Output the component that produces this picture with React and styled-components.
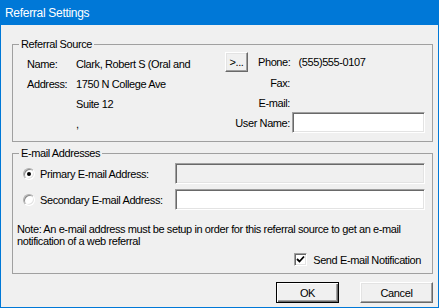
import React from "react";
import styled, { createGlobalStyle, css } from "styled-components";

const Global = createGlobalStyle`
  html, body { margin: 0; padding: 0; background: #fff; }
  body { font-family: "Liberation Sans", Arial, sans-serif; }
  * { box-sizing: border-box; }
`;

const Window = styled.div`
  width: 439px;
  height: 308px;
  border: 1px solid #0078d7;
  display: flex;
  flex-direction: column;
  font-family: "Liberation Sans", Arial, sans-serif;
  font-size: 11px;
  letter-spacing: -0.4px;
  color: #000;
`;

const TitleBar = styled.div`
  height: 24px;
  background: #0078d7;
  color: #fff;
  display: flex;
  align-items: center;
  padding-left: 4px;
  font-size: 12px;
  letter-spacing: -0.3px;
`;

const Body = styled.div`
  flex: 1;
  background: #f0f0f0;
  padding: 13px 5px 0 11px;
  display: flex;
  flex-direction: column;
`;

const Group = styled.fieldset`
  margin: ${(p) => (p.$gap ? `${p.$gap}px` : "0")} 0 0 0;
  padding: 0;
  min-width: 0;
  border: 1px solid #a0a0a0;
`;

const Legend = styled.legend`
  margin-left: 6px;
  padding: 0 2px;
  line-height: 13px;
`;

const SourceRow = styled.div`
  display: flex;
  align-items: flex-start;
  padding: 0 7px 7px 14px;
`;

const LeftGrid = styled.div`
  display: grid;
  grid-template-columns: 49px 149px;
  grid-auto-rows: 20px;
  align-items: center;
  margin-top: 3px;
  white-space: nowrap;
`;

const RightGrid = styled.div`
  display: grid;
  grid-template-columns: 65px 133px;
  column-gap: 2px;
  grid-template-rows: 21px 21px 19px 21px;
  align-items: center;
  white-space: nowrap;
`;

const TopLine = styled.div`
  grid-column: 1 / span 2;
  display: flex;
  align-items: center;
`;

const RightLabel = styled.span`
  text-align: right;
`;

const Spaced = styled.span`
  margin-left: ${(p) => p.$ml || 0}px;
`;

const raised = css`
  background: #f0f0f0;
  border: 1px solid;
  border-color: #fff #696969 #696969 #fff;
  box-shadow: inset -1px -1px #a0a0a0, inset 1px 1px #e3e3e3;
  font-family: "Liberation Sans", Arial, sans-serif;
  font-size: 11px;
  letter-spacing: -0.4px;
  color: #000;
  padding: 0;
`;

const SmallButton = styled.button`
  ${raised};
  width: 23px;
  height: 20px;
  line-height: 16px;
`;

const sunken = css`
  border: 1px solid;
  border-color: #a0a0a0 #fff #fff #a0a0a0;
  box-shadow: inset 1px 1px #696969, inset -1px -1px #e3e3e3;
`;

const TextBox = styled.div`
  ${sunken};
  width: ${(p) => p.$w}px;
  height: 21px;
  background: ${(p) => (p.$disabled ? "#f0f0f0" : "#fff")};
`;

const EmailBody = styled.div`
  display: flex;
  flex-direction: column;
  padding: 0 0 7px 0;
`;

const RadioRow = styled.div`
  display: flex;
  align-items: center;
  height: 21px;
  margin-top: ${(p) => p.$mt}px;
  padding-left: 10px;
`;

const RadioLabel = styled.label`
  display: flex;
  align-items: center;
  width: 152px;
  gap: 5px;
  white-space: nowrap;
`;

const Radio = styled.span`
  position: relative;
  width: 12px;
  height: 12px;
  border-radius: 50%;
  background: #fff;
  border: 1px solid;
  border-color: #b0b0b0 #fff #fff #b0b0b0;
  box-shadow: inset 1px 1px #8a8a8a, inset -1px -1px #e3e3e3;
  flex: none;
  ${(p) =>
    p.$checked &&
    css`
      &::after {
        content: "";
        position: absolute;
        left: 3px;
        top: 3px;
        width: 4px;
        height: 4px;
        border-radius: 50%;
        background: #000;
      }
    `}
`;

const Note = styled.div`
  margin-top: 13px;
  padding-left: 4px;
  line-height: 12px;
  white-space: nowrap;
`;

const CheckRow = styled.label`
  display: flex;
  align-items: center;
  justify-content: flex-end;
  gap: 6px;
  height: 13px;
  margin-top: 6px;
  padding-right: 11px;
  white-space: nowrap;
`;

const CheckBox = styled.span`
  ${sunken};
  width: 13px;
  height: 13px;
  background: #fff;
  display: flex;
  align-items: center;
  justify-content: center;
  flex: none;
`;

const Footer = styled.div`
  display: flex;
  justify-content: flex-end;
  gap: 21px;
  margin-top: 8px;
`;

const DialogButton = styled.button`
  ${raised};
  width: ${(p) => p.$w}px;
  height: 21px;
  ${(p) =>
    p.$default &&
    css`
      border: 1px solid #000;
      box-shadow: inset 1px 1px #fff, inset -1px -1px #696969, inset -2px -2px #a0a0a0;
    `}
`;

export default function App() {
  return (
    <>
      <Global />
      <Window>
        <TitleBar>Referral Settings</TitleBar>
        <Body>
          <Group>
            <Legend>Referral Source</Legend>
            <SourceRow>
              <LeftGrid>
                <span>Name:</span>
                <span>Clark, Robert S (Oral and</span>
                <span>Address:</span>
                <span>1750 N College Ave</span>
                <span />
                <span>Suite 12</span>
                <span />
                <span>,</span>
              </LeftGrid>
              <RightGrid>
                <TopLine>
                  <SmallButton>&gt;...</SmallButton>
                  <Spaced $ml={10}>Phone:</Spaced>
                  <Spaced $ml={8}>(555)555-0107</Spaced>
                </TopLine>
                <RightLabel>Fax:</RightLabel>
                <span />
                <RightLabel>E-mail:</RightLabel>
                <span />
                <RightLabel>User Name:</RightLabel>
                <TextBox $w={133} />
              </RightGrid>
            </SourceRow>
          </Group>
          <Group $gap={5}>
            <Legend>E-mail Addresses</Legend>
            <EmailBody>
              <RadioRow $mt={3}>
                <RadioLabel>
                  <Radio $checked />
                  Primary E-mail Address:
                </RadioLabel>
                <TextBox $w={250} $disabled />
              </RadioRow>
              <RadioRow $mt={5}>
                <RadioLabel>
                  <Radio />
                  Secondary E-mail Address:
                </RadioLabel>
                <TextBox $w={250} />
              </RadioRow>
              <Note>
                Note: An e-mail address must be setup in order for this referral source to get an e-mail
                <br />
                notification of a web referral
              </Note>
              <CheckRow>
                <CheckBox>
                  <svg width="9" height="9" viewBox="0 0 9 9">
                    <path d="M1 4 L3.5 6.5 L8 1.5" stroke="#000" strokeWidth="1.8" fill="none" />
                  </svg>
                </CheckBox>
                Send E-mail Notification
              </CheckRow>
            </EmailBody>
          </Group>
          <Footer>
            <DialogButton $w={63} $default>OK</DialogButton>
            <DialogButton $w={73}>Cancel</DialogButton>
          </Footer>
        </Body>
      </Window>
    </>
  );
}
